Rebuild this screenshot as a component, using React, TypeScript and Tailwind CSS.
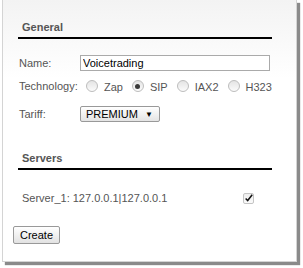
import React from "react";

const font = { fontFamily: '"Liberation Sans", Arial, sans-serif' };

function Radio({ label, checked }: { label: string; checked?: boolean }) {
  return (
    <span className="flex items-center">
      <span className="flex h-[12px] w-[12px] items-center justify-center rounded-full border border-[#bdbdbd] bg-gradient-to-b from-[#e4e4e4] to-[#fbfbfb]">
        {checked && <span className="h-[5px] w-[5px] rounded-full bg-[#3a3a3a]" />}
      </span>
      <span className="ml-[6px] pt-[3px] text-[#555]">{label}</span>
    </span>
  );
}

function Heading({ children }: { children: React.ReactNode }) {
  return (
    <div className="w-[254px] border-b-2 border-black pb-[3px] pl-[4px] font-bold text-[#555]">
      {children}
    </div>
  );
}

export default function App() {
  return (
    <div className="h-[268px] w-[303px] bg-white text-[11px] leading-[13px]" style={font}>
      <div className="ml-[2px] h-[262px] w-[295px] border border-t-0 border-[#d4d4d4] bg-gradient-to-b from-[#f3f3f3] to-white to-[30%] pl-[15px] pt-[21px] shadow-[3px_3px_1px_#8a8a8a]">
        <Heading>General</Heading>

        <div className="mt-[16px] flex items-center">
          <span className="w-[62px] pl-[1px] text-[#555]">Name:</span>
          <input
            readOnly
            value="Voicetrading"
            className="h-[16px] w-[190px] border border-[#aaa] bg-white px-[2px] text-[11px] text-black outline-none"
            style={font}
          />
        </div>

        <div className="mt-[7px] flex items-center">
          <span className="w-[68px] pl-[1px] text-[#555]">Technology:</span>
          <div className="flex items-center gap-[9px]">
            <Radio label="Zap" />
            <Radio label="SIP" checked />
            <Radio label="IAX2" />
            <Radio label="H323" />
          </div>
        </div>

        <div className="mt-[12px] flex items-center">
          <span className="w-[62px] pl-[1px] text-[#555]">Tariff:</span>
          <div className="flex h-[16px] w-[80px] items-center justify-between rounded-[2px] border border-[#999] bg-gradient-to-b from-white to-[#e4e4e4] pl-[5px] pr-[6px] text-black">
            <span>PREMIUM</span>
            <span className="text-[8px]">▼</span>
          </div>
        </div>

        <div className="mt-[30px]">
          <Heading>Servers</Heading>
        </div>

        <div className="mt-[22px] flex w-[254px] items-center pl-[4px]">
          <span className="flex-1 text-[#555]">Server_1: 127.0.0.1|127.0.0.1</span>
          <span className="mr-[18px] flex h-[11px] w-[11px] items-center justify-center rounded-[2px] border border-[#c4c4c4] bg-gradient-to-b from-[#eee] to-[#fafafa]">
            <svg width="11" height="11" viewBox="0 0 11 11">
              <path d="M2 5.5 L4.5 8 L10 1" stroke="#111" strokeWidth="1.8" fill="none" />
            </svg>
          </span>
        </div>

        <button
          className="ml-[-5px] mt-[21px] block h-[18px] w-[47px] rounded-[2px] border border-[#999] bg-gradient-to-b from-white to-[#e2e2e2] text-[11px] text-black"
          style={font}
        >
          Create
        </button>
      </div>
    </div>
  );
}
